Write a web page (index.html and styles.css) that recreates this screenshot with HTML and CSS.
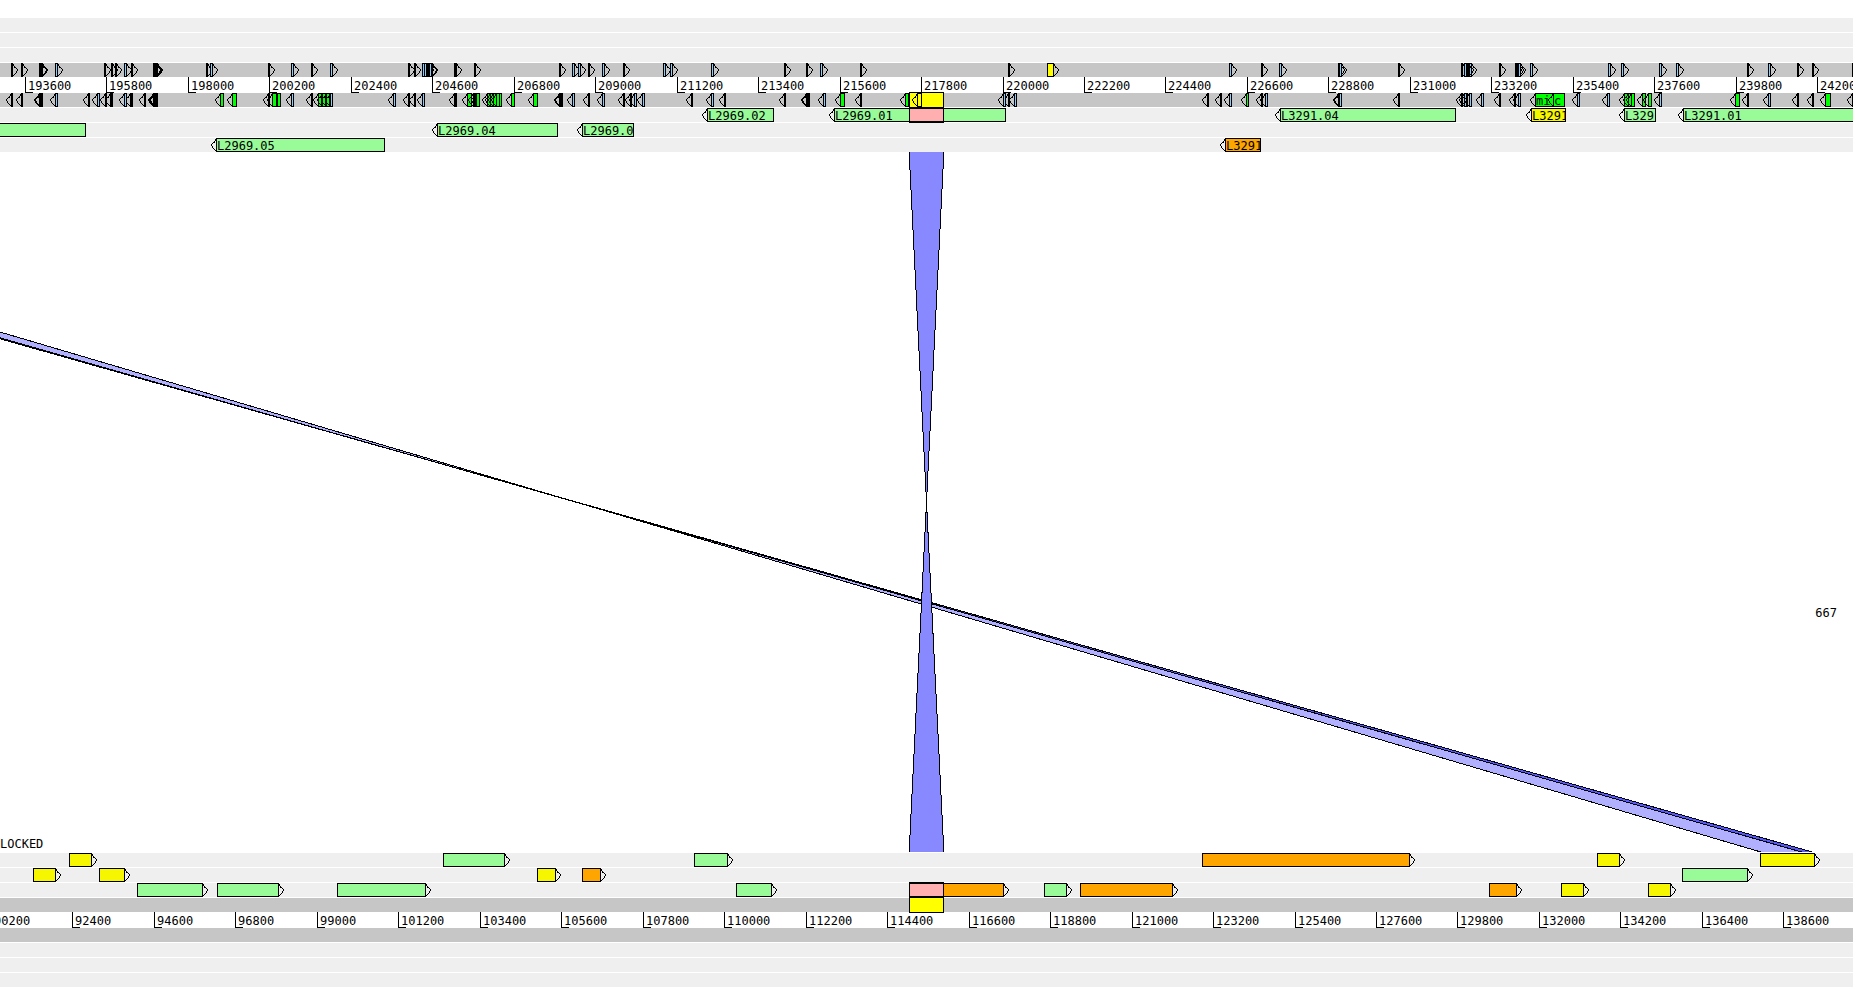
FILE: index.html
```html
<!DOCTYPE html>
<html lang="en">
<head>
<meta charset="utf-8">
<title>Genome comparison</title>
<link rel="stylesheet" href="styles.css">
</head>
<body>
<svg class="defs" aria-hidden="true">
  <symbol id="head-fwd" viewBox="0 0 5 14"><path d="M0 1h1v1H0zM0 2h1v1H0zM1 3h1v1H1zM1 4h1v1H1zM2 4h1v1H2zM3 5h1v1H3zM4 6h1v2H4zM3 8h1v1H3zM3 9h1v1H3zM2 10h1v1H2zM1 11h1v1H1zM0 12h1v1H0z"/></symbol>
  <symbol id="head-rev" viewBox="0 0 5 14"><path d="M4 1h1v1H4zM4 2h1v1H4zM3 3h1v1H3zM3 4h1v1H3zM2 4h1v1H2zM1 5h1v1H1zM0 6h1v2H0zM1 8h1v1H1zM1 9h1v1H1zM2 10h1v1H2zM3 11h1v1H3zM4 12h1v1H4z"/></symbol>
</svg>
<main class="viewer">
  <section class="genome">
    <div class="track"></div>
    <div class="track"></div>
    <div class="track"></div>
    <div class="track strand" data-track="topFwd"></div>
    <div class="ruler" data-ruler="top"></div>
    <div class="track strand" data-track="topRev"></div>
    <div class="track" data-track="genesA"></div>
    <div class="track" data-track="genesB"></div>
    <div class="track last" data-track="genesC"></div>
  </section>
  <section class="matches">
    <svg class="links" viewBox="0 0 1853 700" preserveAspectRatio="none">
      <polygon class="link light" points="-17,175 1771,703 1812,703 -17,181"/>
      <polygon class="link dark" points="-17,181 1812,703 1823,703 -17,182"/>
      <polygon class="link mid" points="909,-3 944,-3 909,703 944,703"/>
    </svg>
    <span class="score">667</span>
    <span class="lock">LOCKED</span>
  </section>
  <section class="genome">
    <div class="track" data-track="lowA"></div>
    <div class="track" data-track="lowB"></div>
    <div class="track" data-track="lowC"></div>
    <div class="track strand" data-track="lowFwd"></div>
    <div class="ruler" data-ruler="low"></div>
    <div class="track strand"></div>
    <div class="track"></div>
    <div class="track"></div>
    <div class="track"></div>
  </section>
</main>
<script src="viewer.js"></script>
</body>
</html>
```
FILE: styles.css
```css
* { box-sizing: border-box; }

body {
  margin: 0;
  background: #fff;
  color: #000;
  font: 12px/16px "DejaVu Sans Mono", "Liberation Mono", monospace;
}

.defs { position: absolute; width: 0; height: 0; }

.viewer {
  display: flex;
  flex-direction: column;
  min-height: 100vh;
  padding: 18px 0 16px;
  overflow: hidden;
}

.track {
  position: relative;
  height: 14px;
  margin-bottom: 1px;
  background: #efefef;
}

.strand { background: #c6c6c6; }
.strand:has(+ .ruler) { margin-bottom: 0; }
.last { margin-bottom: 0; }

.ruler {
  position: relative;
  height: 16px;
  overflow: hidden;
}

.tick {
  position: absolute;
  top: 0;
  height: 16px;
  padding-left: 2px;
  border-left: 1px solid #000;
  line-height: 18px;
}

.tick::after {
  content: "";
  position: absolute;
  left: 0;
  bottom: 0;
  width: 7px;
  height: 1px;
  background: #000;
}

.feature {
  position: absolute;
  top: 0;
  height: 14px;
  border: 1px solid #000;
}

.label {
  display: block;
  height: 12px;
  overflow: hidden;
  line-height: 14px;
  white-space: nowrap;
}

.head {
  position: absolute;
  top: -1px;
  width: 5px;
  height: 14px;
  shape-rendering: crispEdges;
}

.head.fwd { left: 100%; margin-left: 1px; }
.head.rev { right: 100%; margin-right: 1px; }

.blue { background: #87cefa; }
.green { background: #00ff00; }
.gene { background: #98fb98; }
.yellow { background: #f6f600; }
.bright { background: #ffff00; }
.orange { background: #ffa500; }
.black { background: #000; }
.select { background: #ffff00; top: -1px; height: 16px; }
.pink { background: #ffafaf; top: -1px; height: 16px; border-width: 2px 1px; }

.matches {
  position: relative;
  flex: 1;
  min-height: 200px;
  margin-bottom: 1px;
}

.links {
  position: absolute;
  top: 0;
  left: 0;
  width: 100%;
  height: 100%;
  overflow: hidden;
}

.link {
  stroke: #000;
  stroke-width: 1px;
  vector-effect: non-scaling-stroke;
  shape-rendering: crispEdges;
}

.light { fill: #b0b0ff; }
.dark { fill: #5858ff; }
.mid { fill: #8888ff; }

.score {
  position: absolute;
  bottom: 33%;
  right: 16px;
}

.lock {
  position: absolute;
  left: 0;
  bottom: 0;
}
```
FILE: viewer.js
```js
// Each feature: [start, width, colour, direction, label]
const fwd = (c, w, xs) => xs.map(x => [x, w, c, "fwd"]);
const rev = (c, w, xs) => xs.map(x => [x, w, c, "rev"]);

const tracks = {
  topFwd: [
    ...fwd("black", 2, [11, 21, 104, 111, 115, 131, 206, 268, 311, 408, 414, 474, 559, 588, 623, 784, 806, 860, 1008, 1261, 1398, 1499, 1747, 1797, 1812, 1852]),
    ...fwd("black", 3, [39, 40, 153, 154, 454]),
    ...fwd("black", 4, [39, 153, 154]),
    ...fwd("blue", 3, [55, 124, 210, 291, 330, 422, 424, 572, 578, 602, 663, 670, 711, 820, 1229, 1279, 1530, 1608, 1621, 1659, 1676, 1768]),
    ...fwd("black", 2, [427, 431, 1338, 1461, 1515, 1517]),
    ...fwd("blue", 3, [429, 1339, 1464, 1469, 1518]),
    ...fwd("black", 2, [1467]),
    [1047, 7, "bright", "fwd"]
  ],
  topRev: [
    ...rev("black", 2, [11, 21, 88, 105, 144, 268, 311, 408, 414, 588, 623, 630, 691, 724, 784, 860, 1008, 1207, 1220, 1261, 1398, 1499, 1514, 1747, 1797, 1812, 1852]),
    ...rev("black", 3, [40, 110, 130, 155, 454, 560, 807]),
    ...rev("black", 4, [39, 154, 153, 559, 806]),
    ...rev("blue", 3, [55, 97, 124, 291, 393, 422, 572, 602, 634, 642, 711, 823, 1003, 1014, 1229, 1265, 1481, 1518, 1577, 1607, 1659, 1768]),
    ...rev("green", 4, [220, 277, 318, 322, 326, 476, 511, 905, 1642, 1648]),
    ...rev("green", 5, [232, 272, 467, 533, 840, 1735]),
    ...rev("black", 3, [473]),
    ...rev("blue", 3, [330]),
    ...rev("green", 5, [487, 490, 493, 496]),
    [499, 3, "green"],
    ...rev("green", 3, [1246]),
    ...rev("black", 2, [1338, 1461, 1466]),
    ...rev("blue", 3, [1339, 1464, 1469]),
    ...rev("green", 6, [1624, 1825]),
    ...rev("green", 4, [1628, 1631]),
    [1535, 19, "green", "rev", "mi"],
    [1553, 12, "green", "rev", "c"],
    [909, 35, "select"],
    [917, 5, "hollow", "rev"]
  ],
  genesA: [
    [707, 67, "gene", "rev", "L2969.02"],
    [834, 172, "gene", "rev", "L2969.01"],
    [909, 35, "pink"],
    [1280, 176, "gene", "rev", "L3291.04"],
    [1531, 35, "yellow", "rev", "L3291"],
    [1624, 32, "gene", "rev", "L329"],
    [1683, 200, "gene", "rev", "L3291.01"]
  ],
  genesB: [
    [-40, 126, "gene"],
    [437, 121, "gene", "rev", "L2969.04"],
    [582, 52, "gene", "rev", "L2969.0"]
  ],
  genesC: [
    [216, 169, "gene", "rev", "L2969.05"],
    [1225, 36, "orange", "rev", "L3291"]
  ],
  lowA: [
    [69, 23, "yellow", "fwd"], [443, 62, "gene", "fwd"], [694, 34, "gene", "fwd"],
    [1202, 208, "orange", "fwd"], [1597, 23, "yellow", "fwd"], [1760, 55, "yellow", "fwd"]
  ],
  lowB: [
    [33, 23, "yellow", "fwd"], [99, 26, "yellow", "fwd"], [537, 19, "yellow", "fwd"],
    [582, 19, "orange", "fwd"], [1682, 66, "gene", "fwd"]
  ],
  lowC: [
    [137, 66, "gene", "fwd"], [217, 62, "gene", "fwd"], [337, 89, "gene", "fwd"],
    [736, 36, "gene", "fwd"], [909, 95, "orange", "fwd"], [909, 35, "pink"],
    [1044, 23, "gene", "fwd"], [1080, 93, "orange", "fwd"], [1489, 28, "orange", "fwd"],
    [1561, 23, "yellow", "fwd"], [1648, 23, "yellow", "fwd"]
  ],
  lowFwd: [[909, 35, "select"]]
};

const rulers = {
  top: { origin: 25, step: 81.46, first: 193600, count: 23 },
  low: { origin: -9, step: 81.47, first: 90200, count: 23 }
};

const SVG = "http://www.w3.org/2000/svg";

function addFeature(track, [x, width, kind, direction, label]) {
  const box = document.createElement("span");
  box.className = "feature " + kind;
  box.style.left = x + "px";
  box.style.width = width + "px";
  if (label) {
    const text = document.createElement("span");
    text.className = "label";
    text.textContent = label;
    box.append(text);
  }
  if (direction) {
    const head = document.createElementNS(SVG, "svg");
    head.setAttribute("class", "head " + direction);
    const use = document.createElementNS(SVG, "use");
    use.setAttribute("href", "#head-" + direction);
    head.append(use);
    box.append(head);
  }
  track.append(box);
}

document.querySelectorAll("[data-track]").forEach(track => {
  tracks[track.dataset.track].forEach(feature => addFeature(track, feature));
});

document.querySelectorAll("[data-ruler]").forEach(ruler => {
  const { origin, step, first, count } = rulers[ruler.dataset.ruler];
  for (let i = 0; i < count; i++) {
    const tick = document.createElement("span");
    tick.className = "tick";
    tick.style.left = Math.round(origin + step * i) + "px";
    tick.textContent = first + i * 2200;
    ruler.append(tick);
  }
});
```
